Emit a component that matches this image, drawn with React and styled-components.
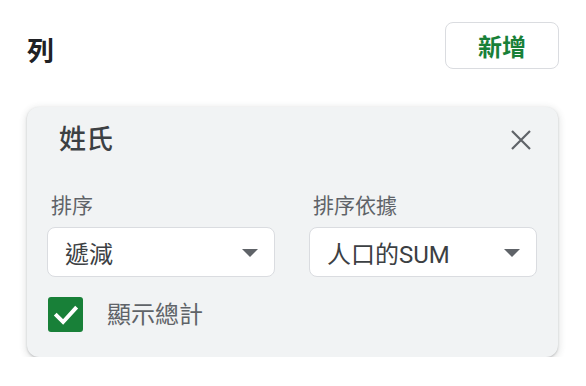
import React from "react";
import styled, { createGlobalStyle } from "styled-components";

const GlobalStyle = createGlobalStyle`
  body {
    margin: 0;
    background: #fff;
    font-family: Roboto, "Noto Sans CJK TC", sans-serif;
    color: #3c4043;
  }
`;

const Page = styled.div`
  width: 586px;
  padding: 22px 27px 0 27px;
  box-sizing: border-box;
`;

const Header = styled.div`
  display: flex;
  justify-content: space-between;
  align-items: flex-start;
  margin-bottom: 38px;
`;

const Title = styled.div`
  margin-top: 15px;
  font-size: 27px;
  line-height: 30px;
  font-weight: 700;
  color: #202124;
`;

const AddButton = styled.button`
  width: 114px;
  height: 47px;
  border: 1px solid #dadce0;
  border-radius: 8px;
  background: #fff;
  color: #188038;
  font-family: inherit;
  font-size: 24px;
  font-weight: 700;
  padding: 0;
  cursor: pointer;
`;

const Card = styled.div`
  width: 531px;
  box-sizing: border-box;
  background: #f1f3f4;
  border-radius: 12px;
  padding: 15px 21px 25px 20px;
  box-shadow: 0 1px 2px rgba(60, 64, 67, 0.25),
    0 2px 6px 2px rgba(60, 64, 67, 0.12);
`;

const CardHeader = styled.div`
  display: flex;
  justify-content: space-between;
  align-items: center;
  padding: 0 4px 0 12px;
  margin-bottom: 34px;
`;

const CardTitle = styled.div`
  font-size: 27px;
  line-height: 36px;
  font-weight: 500;
  color: #3c4043;
`;

const CloseButton = styled.button`
  border: none;
  background: none;
  padding: 0;
  width: 24px;
  height: 24px;
  display: flex;
  align-items: center;
  justify-content: center;
  cursor: pointer;
`;

const Fields = styled.div`
  display: grid;
  grid-template-columns: 1fr 1fr;
  column-gap: 34px;
`;

const Field = styled.div`
  display: flex;
  flex-direction: column;
`;

const Label = styled.div`
  font-size: 21px;
  line-height: 28px;
  color: #5f6368;
  padding-left: 4px;
  margin-bottom: 7px;
`;

const Select = styled.div`
  height: 50px;
  box-sizing: border-box;
  background: #fff;
  border: 1px solid #dadce0;
  border-radius: 8px;
  display: flex;
  align-items: center;
  justify-content: space-between;
  padding: 0 16px 0 17px;
  font-size: 24px;
  color: #3c4043;
`;

const Arrow = styled.span`
  width: 0;
  height: 0;
  border-left: 8px solid transparent;
  border-right: 8px solid transparent;
  border-top: 8px solid #5f6368;
  margin-top: 2px;
`;

const CheckRow = styled.label`
  display: flex;
  align-items: center;
  gap: 24px;
  margin-top: 20px;
  padding-left: 1px;
`;

const CheckBox = styled.span`
  width: 35px;
  height: 35px;
  border-radius: 3px;
  background: #188038;
  display: flex;
  align-items: center;
  justify-content: center;
`;

const CheckText = styled.span`
  font-size: 24px;
  line-height: 32px;
  color: #5f6368;
`;

const fields = [
  { label: "排序", value: "遞減" },
  { label: "排序依據", value: "人口的SUM" },
];

export default function App() {
  return (
    <>
      <GlobalStyle />
      <Page>
        <Header>
          <Title>列</Title>
          <AddButton>新增</AddButton>
        </Header>
        <Card>
          <CardHeader>
            <CardTitle>姓氏</CardTitle>
            <CloseButton aria-label="close">
              <svg width="20" height="20" viewBox="0 0 20 20">
                <path
                  d="M1 1 L19 19 M19 1 L1 19"
                  stroke="#5f6368"
                  strokeWidth="2.2"
                  fill="none"
                />
              </svg>
            </CloseButton>
          </CardHeader>
          <Fields>
            {fields.map((f) => (
              <Field key={f.label}>
                <Label>{f.label}</Label>
                <Select>
                  <span>{f.value}</span>
                  <Arrow />
                </Select>
              </Field>
            ))}
          </Fields>
          <CheckRow>
            <CheckBox>
              <svg width="28" height="28" viewBox="0 0 24 24">
                <path
                  d="M4 12.5 L9.5 18 L20 6.5"
                  stroke="#fff"
                  strokeWidth="3.4"
                  fill="none"
                  strokeLinecap="square"
                />
              </svg>
            </CheckBox>
            <CheckText>顯示總計</CheckText>
          </CheckRow>
        </Card>
      </Page>
    </>
  );
}
